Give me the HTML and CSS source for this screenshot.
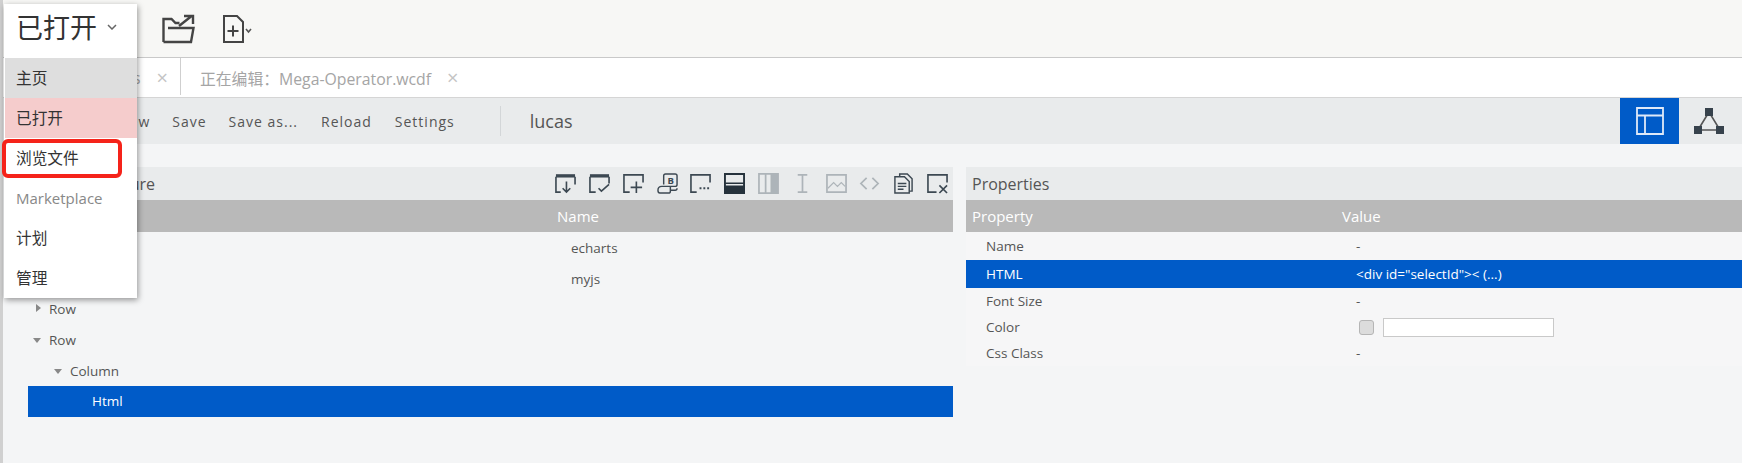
FILE: index.html
```html
<!DOCTYPE html>
<html>
<head>
  <title>Layout editor</title>
  <link rel="stylesheet" href="styles.css">
</head>
<body>
  <header class="toolbar">
    <svg class="tool-folder" width="34" height="30" viewBox="0 0 34 30">
      <path d="M1.500 28V5h8l4 4h4M6 14h25.500L29 28H1.500" fill="none" stroke="#444" stroke-width="2.400"/>
      <path d="M17 12L29 2.500M22 2h9v8" fill="none" stroke="#444" stroke-width="2.400"/>
    </svg>
    <svg class="tool-new" width="32" height="28" viewBox="0 0 32 28">
      <path d="M2 1h13l6 6v20H2zM5.500 16h11M11 10.500v11" fill="none" stroke="#444" stroke-width="2"/>
      <path d="M24 14l2.500 3 2.500-3" fill="none" stroke="#555" stroke-width="1.600"/>
    </svg>
  </header>

  <nav class="menu">
    <div class="menu-head">已打开<svg width="10" height="6" viewBox="0 0 10 6"><path d="M1 1l4 4 4-4" fill="none" stroke="#666" stroke-width="1.500"/></svg></div>
    <div class="menu-item home">主页</div>
    <div class="menu-item opened">已打开</div>
    <div class="menu-item">浏览文件</div>
    <div class="menu-item muted">Marketplace</div>
    <div class="menu-item">计划</div>
    <div class="menu-item">管理</div>
    <div class="menu-mark"></div>
  </nav>

  <div class="tabs">
    <div class="tab first">正在编辑：lucas<span class="tab-x">×</span></div>
    <div class="tab">正在编辑：Mega-Operator.wcdf<span class="tab-x">×</span></div>
  </div>

  <div class="actions">
    <span class="action new">New</span>
    <span class="action save">Save</span>
    <span class="action save-as">Save as...</span>
    <span class="action reload">Reload</span>
    <span class="action settings">Settings</span>
    <span class="doc-name">lucas</span>
    <span class="view-btn active">
      <svg width="30" height="30" viewBox="0 0 30 30"><path d="M2 2h26v26H2zM2 9.500h26M10 9.500V28" fill="none" stroke="#dfe9f8" stroke-width="1.800"/></svg>
    </span>
    <span class="view-btn">
      <svg width="32" height="28" viewBox="0 0 32 28"><path d="M16 5L5 23h22z" fill="none" stroke="#555" stroke-width="1.600"/><path d="M12 1h8v8h-8zM1 19h8v8H1zM23 19h8v8h-8z" fill="#37424c"/></svg>
    </span>
  </div>

  <main class="content">
    <section class="panel left">
      <div class="panel-head">
        <span>Layout Structure</span>
        <div class="icons">
          <svg viewBox="0 0 22 22"><path d="M1 3h20" stroke="#3c4852" stroke-width="3.500"/><path d="M1 4v16h5M21 4v8M12 9v11M8 16l4 4 4-4" fill="none" stroke="#3c4852" stroke-width="1.700"/></svg>
          <svg viewBox="0 0 22 22"><path d="M1 3h20" stroke="#3c4852" stroke-width="3.500"/><path d="M1 4v16h6M21 4v7M10 16l3 3 8-7" fill="none" stroke="#3c4852" stroke-width="1.700"/></svg>
          <svg viewBox="0 0 22 22"><path d="M21 10V2H1v18h6M14 9v12M8 15h12" fill="none" stroke="#3c4852" stroke-width="1.700"/></svg>
          <svg viewBox="0 0 22 22"><path d="M7 12V3q0-2 2-2h10q2 0 2 2v9q0 2-2 2h-5M1 18q0-4 4-4h9v5q0 2-2 2H3q-2 0-2-3zM14 18h5q2 0 2-2" fill="none" stroke="#3c4852" stroke-width="1.500"/><text class="icon-b" x="11" y="11">B</text></svg>
          <svg viewBox="0 0 22 22"><path d="M21 10V2H1v18h6" fill="none" stroke="#3c4852" stroke-width="1.700"/><path d="M10 15h2v2h-2zM14 15h2v2h-2zM18 15h2v2h-2z" fill="#3c4852"/></svg>
          <svg viewBox="0 0 22 22"><path d="M1 1h20v20H1z" fill="none" stroke="#26323c" stroke-width="2"/><path d="M1 10h20v1.500H1zM1 13h20v8H1z" fill="#26323c"/></svg>
          <svg class="off" viewBox="0 0 22 22"><path d="M1 1h20v20H1zM8 1v20M14 1v20" fill="none" stroke="#9aa2a8" stroke-width="1.800"/><path d="M14 1h7v20h-7z" fill="#9aa2a8"/></svg>
          <svg class="off" viewBox="0 0 22 22"><path d="M6 2h10M6 20h10M11 2v18" fill="none" stroke="#9aa2a8" stroke-width="1.800"/></svg>
          <svg class="off" viewBox="0 0 22 22"><path d="M1 2h20v18H1z" fill="none" stroke="#9aa2a8" stroke-width="1.800"/><path d="M2 16l6-6 4 4 4-4 4 4" fill="none" stroke="#9aa2a8" stroke-width="1.200"/></svg>
          <svg class="off" viewBox="0 0 22 22"><path d="M8 5l-6 6 6 6M14 5l6 6-6 6" fill="none" stroke="#9aa2a8" stroke-width="1.800"/></svg>
          <svg viewBox="0 0 22 22"><path d="M7 4V1h8l5 5v13h-3M2 4h10l5 5v12H2zM5 11h9M5 14h9M5 17h6" fill="none" stroke="#3c4852" stroke-width="1.500"/></svg>
          <svg viewBox="0 0 22 22"><path d="M21 10V2H1v18h9M13 13l8 8M21 13l-8 8" fill="none" stroke="#3c4852" stroke-width="1.700"/></svg>
        </div>
      </div>
      <div class="col-head">
        <span class="col-type">Type</span>
        <span>Name</span>
      </div>
      <div class="tree-row"><span class="col-type">Row</span><span class="name-cell">echarts</span></div>
      <div class="tree-row"><span class="col-type">Row</span><span class="name-cell">myjs</span></div>
      <div class="tree-row"><span class="col-type"><i class="arrow right"></i>Row</span></div>
      <div class="tree-row"><span class="col-type"><i class="arrow down"></i>Row</span></div>
      <div class="tree-row"><span class="col-type level-2"><i class="arrow down"></i>Column</span></div>
      <div class="tree-row selected"><span class="col-type level-3">Html</span></div>
    </section>

    <section class="panel right">
      <div class="panel-head"><span>Properties</span></div>
      <div class="col-head">
        <span class="col-prop">Property</span>
        <span>Value</span>
      </div>
      <div class="prop-row tall"><span class="prop-name">Name</span><span>-</span></div>
      <div class="prop-row tall selected"><span class="prop-name">HTML</span><span>&lt;div id="selectId"&gt;&lt; (...)</span></div>
      <div class="prop-row"><span class="prop-name">Font Size</span><span>-</span></div>
      <div class="prop-row"><span class="prop-name">Color</span><i class="swatch"></i><i class="color-input"></i></div>
      <div class="prop-row"><span class="prop-name">Css Class</span><span>-</span></div>
    </section>
  </main>
</body>
</html>
```

FILE: styles.css
```css
* {
  box-sizing: border-box;
}
html, body {
  height: 100%;
}
body {
  margin: 0;
  overflow: hidden;
  display: flex;
  flex-direction: column;
  background-color: #f4f5f6;
  border-left: 3px solid #d0d0d0;
  font-family: "Open Sans", "Noto Sans CJK SC", sans-serif;
  font-size: 14px;
  color: #555;
}
.toolbar {
  height: 58px;
  flex: none;
  margin-left: -3px;
  display: flex;
  align-items: center;
  padding-left: 162px;
  background-color: #f7f7f5;
  border-bottom: 1px solid #c9c9c9;
  box-shadow: 0 1px 3px rgba(0, 0, 0, 0.12);
}
.tool-new {
  margin-left: 26px;
}
.menu {
  position: absolute;
  z-index: 5;
  left: 4px;
  top: 4px;
  width: 133px;
  height: 294px;
  background-color: #ffffff;
  box-shadow: 1px 2px 6px rgba(0, 0, 0, 0.4);
}
.menu-head {
  height: 54px;
  padding: 0 0 9px 12px;
  display: flex;
  align-items: center;
  gap: 10px;
  font-size: 27px;
  color: #333;
}
.menu-item {
  height: 40px;
  padding-left: 11px;
  margin-left: 1px;
  line-height: 40px;
  font-size: 15.700px;
  color: #333;
}
.menu-item.home {
  background-color: #dedede;
}
.menu-item.opened {
  background-color: #f5cccc;
}
.menu-item.muted {
  font-size: 15px;
  color: #888;
}
.menu-mark {
  position: absolute;
  left: -2px;
  top: 135px;
  width: 120px;
  height: 39px;
  border: 4px solid #f5231a;
  border-radius: 6px;
}
.tabs {
  height: 40px;
  flex: none;
  display: flex;
  background-color: #ffffff;
  border-bottom: 1px solid #d5d5d5;
  font-size: 15.800px;
  color: #a5a5a5;
}
.tab {
  padding: 8px 0 0 19px;
  line-height: 24px;
}
.tab.first {
  width: 178px;
  white-space: nowrap;
  border-right: 1px solid #cfcfcf;
  margin-bottom: 2px;
  display: flex;
  justify-content: flex-end;
  padding-right: 12px;
  overflow: hidden;
}
.tab-x {
  margin-left: 16px;
  font-size: 20px;
  color: #c4c4c4;
}
.actions {
  height: 46px;
  flex: none;
  display: flex;
  align-items: center;
  background-color: #e9ebec;
  padding-left: 115px;
  letter-spacing: 1px;
}
.action {
  margin-right: 22px;
}
.action.save-as, .action.reload {
  margin-right: 23px;
}
.action.settings {
  margin-right: 45px;
}
.doc-name {
  padding-left: 29px;
  height: 30px;
  line-height: 30px;
  border-left: 1px solid #d3d6d8;
  font-size: 18px;
  letter-spacing: 0;
  margin-right: auto;
}
.view-btn {
  width: 59px;
  height: 46px;
  display: flex;
  align-items: center;
  justify-content: center;
}
.view-btn.active {
  background-color: #005bc8;
}
.view-btn:last-child {
  margin-right: 4px;
}
.content {
  flex: 1;
  display: flex;
  gap: 13px;
  padding: 23px 0 0 25px;
}
.panel.left {
  width: 925px;
  flex: none;
}
.panel.right {
  flex: 1;
}
.panel-head {
  height: 33px;
  display: flex;
  align-items: center;
  justify-content: space-between;
  padding-left: 6px;
  background-color: #e9ebec;
  font-size: 16px;
  color: #555;
}
.left .panel-head {
  padding-left: 3px;
}
.icons {
  display: flex;
  gap: 12.800px;
  padding-right: 5px;
}
.icons svg {
  width: 21px;
  height: 21px;
}
.icons svg.off {
  opacity: 0.75;
}
.icon-b {
  font-size: 10px;
  font-weight: 700;
  fill: #3c4852;
}
.col-head {
  height: 32px;
  display: flex;
  align-items: center;
  background-color: #b9b9b9;
  color: #ffffff;
  font-size: 15px;
}
.left .col-head {
  margin-bottom: 1px;
}
.col-type {
  width: 529px;
  flex: none;
  padding-left: 24px;
  display: block;
}
.col-prop {
  width: 376px;
  flex: none;
  padding-left: 6px;
}
.tree-row {
  height: 30.600px;
  display: flex;
  align-items: center;
  font-size: 13.500px;
}
.name-cell {
  padding-left: 14px;
}
.level-3 {
  padding-left: 64px;
}
.arrow {
  display: inline-block;
  width: 0;
  height: 0;
  margin-right: 8px;
  vertical-align: 2px;
}
.arrow.right {
  margin-left: 8px;
  border-left: 5px solid #888;
  border-top: 4px solid transparent;
  border-bottom: 4px solid transparent;
}
.arrow.down {
  margin-left: 5px;
  border-top: 5px solid #888;
  border-left: 4px solid transparent;
  border-right: 4px solid transparent;
}
.col-type:has(.arrow) {
  padding-left: 0;
}
.col-type.level-2:has(.arrow) {
  padding-left: 21px;
}
.selected {
  background-color: #005bc8;
  color: #ffffff;
}
.prop-row {
  height: 26px;
  display: flex;
  align-items: center;
  font-size: 13.500px;
  background-color: #f6f6f7;
}
.prop-row.tall {
  height: 28px;
}
.prop-row.selected {
  background-color: #005bc8;
}
.prop-name {
  width: 390px;
  flex: none;
  padding-left: 20px;
}
.swatch {
  width: 15px;
  height: 15px;
  margin-left: 3px;
  border: 1px solid #b5b5b5;
  border-radius: 3px;
  background-color: #dcdcdc;
}
.color-input {
  width: 171px;
  height: 19px;
  margin-left: 9px;
  border: 1px solid #c9c9c9;
  background-color: #ffffff;
}
```
